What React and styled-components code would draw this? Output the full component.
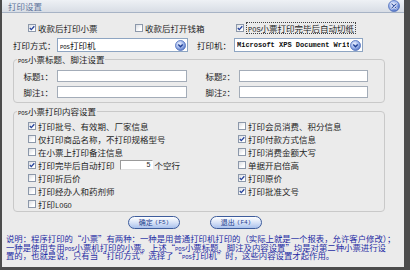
import React from 'react';
import styled, { createGlobalStyle } from 'styled-components';

const CJK = '"Noto Sans CJK SC", "Liberation Sans", sans-serif';

const leftItems = [
  { text: '打印批号、有效期、厂家信息', on: true },
  { text: '仅打印商品名称，不打印规格型号', on: false },
  { text: '在小票上打印备注信息', on: false },
  { text: '打印完毕后自动打印', on: true, blank: '5' },
  { text: '打印折后价', on: false },
  { text: '打印经办人和药剂师', on: false },
  { text: '打印', latin: 'LOGO', on: false },
];

const rightItems = [
  { text: '打印会员消费、积分信息', on: false },
  { text: '打印付款方式信息', on: true },
  { text: '打印消费金额大写', on: false },
  { text: '单据开启倍高', on: false },
  { text: '打印原价', on: true },
  { text: '打印批准文号', on: true },
];

function Check({ on }) {
  return (
    <Box>
      {on && (
        <svg width="6" height="6" viewBox="0 0 6 6">
          <polyline points="0.8,3 2.3,4.6 5.3,1.2" fill="none" stroke="#23409a" strokeWidth="1.3" />
        </svg>
      )}
    </Box>
  );
}

function DropButton() {
  return (
    <svg width="11" height="11" viewBox="0 0 11 11">
      <defs>
        <radialGradient id="db" cx="40%" cy="35%" r="65%">
          <stop offset="0%" stopColor="#eef3ff" />
          <stop offset="60%" stopColor="#9db4ea" />
          <stop offset="100%" stopColor="#5878c6" />
        </radialGradient>
      </defs>
      <circle cx="5.5" cy="5.5" r="5" fill="url(#db)" stroke="#4f6fbb" strokeWidth="0.8" />
      <polyline points="3.3,4.5 5.5,6.7 7.7,4.5" fill="none" stroke="#1f3f95" strokeWidth="1.4" />
    </svg>
  );
}

function CloseButton() {
  return (
    <svg width="12" height="12" viewBox="0 0 12 12">
      <defs>
        <radialGradient id="cb" cx="40%" cy="35%" r="65%">
          <stop offset="0%" stopColor="#e6eeff" />
          <stop offset="60%" stopColor="#93acea" />
          <stop offset="100%" stopColor="#4d6fc2" />
        </radialGradient>
      </defs>
      <circle cx="6" cy="6" r="5.5" fill="url(#cb)" stroke="#5574bd" strokeWidth="0.8" />
      <path d="M3.8 3.8 L8.2 8.2 M8.2 3.8 L3.8 8.2" stroke="#fff" strokeWidth="2.4" strokeLinecap="round" />
      <path d="M3.8 3.8 L8.2 8.2 M8.2 3.8 L3.8 8.2" stroke="#3454a6" strokeWidth="1.2" strokeLinecap="round" />
    </svg>
  );
}

function ContentItem({ item }) {
  return (
    <CheckItem>
      <Check on={item.on} />
      <span>
        {item.text}
        {item.latin && <Lat $size={7}>{item.latin}</Lat>}
      </span>
      {item.blank && (
        <>
          <Blank>{item.blank}</Blank>
          <span>个空行</span>
        </>
      )}
    </CheckItem>
  );
}

export default function App() {
  return (
    <>
      <GlobalStyle />
      <Window>
        <TitleBar>
          <Title>打印设置</Title>
          <CloseButton />
        </TitleBar>
        <Body>
          <Main>
            <TopRow>
              <CheckItem $w={107}>
                <Check on />
                <span>收款后打印小票</span>
              </CheckItem>
              <CheckItem $w={101}>
                <Check on={false} />
                <span>收款后打开钱箱</span>
              </CheckItem>
              <CheckItem>
                <Check on />
                <Focused>
                  <Lat $size={7}>POS</Lat>小票打印完毕后自动切纸
                </Focused>
              </CheckItem>
            </TopRow>

            <SelectRow>
              <Label $w={44}>打印方式：</Label>
              <Select $w={131}>
                <SelectText>
                  <Lat $size={5.5}>POS</Lat>打印机
                </SelectText>
                <DropButton />
              </Select>
              <Label $w={37} $ml={9}>打印机：</Label>
              <Select $w={129}>
                <SelectText $mono>Microsoft XPS Document Writer</SelectText>
                <DropButton />
              </Select>
            </SelectRow>

            <Group $mt={2}>
              <Legend>
                <Lat $size={5.5}>POS</Lat>小票标题、脚注设置
              </Legend>
              <FieldGrid>
                <FieldLabel>标题<Digit>1</Digit>：</FieldLabel>
                <TextBox />
                <FieldLabel>标题<Digit>2</Digit>：</FieldLabel>
                <TextBox />
                <FieldLabel>脚注<Digit>1</Digit>：</FieldLabel>
                <TextBox />
                <FieldLabel>脚注<Digit>2</Digit>：</FieldLabel>
                <TextBox />
              </FieldGrid>
            </Group>

            <Group $mt={3}>
              <Legend>
                <Lat $size={5.5}>POS</Lat>小票打印内容设置
              </Legend>
              <OptionGrid>
                {leftItems.map((it) => (
                  <ContentItem key={it.text + (it.latin || '')} item={it} />
                ))}
                {rightItems.map((it) => (
                  <ContentItem key={it.text} item={it} />
                ))}
              </OptionGrid>
            </Group>

            <ButtonRow>
              <PillButton>确定<Lat $size={6}>(F5)</Lat></PillButton>
              <PillButton>退出<Lat $size={6}>(F4)</Lat></PillButton>
            </ButtonRow>
          </Main>

          <Note>
            <NoteLine>说明：程序打印的“小票”有两种：一种是用普通打印机打印的（实际上就是一个报表，允许客户修改）；</NoteLine>
            <NoteLine>一种是使用专用<Lat $size={5.5}>POS</Lat>小票机打印的小票。上述“<Lat $size={5.5}>POS</Lat>小票标题、脚注及内容设置”均是对第二种小票进行设</NoteLine>
            <NoteLine>置的，也就是说，只有当“打印方式”选择了“<Lat $size={5.5}>POS</Lat>打印机”时，这些内容设置才起作用。</NoteLine>
          </Note>
        </Body>
      </Window>
    </>
  );
}

const GlobalStyle = createGlobalStyle`
  html, body {
    margin: 0;
    padding: 0;
    background: #4e4e4e;
  }
  body {
    font-family: ${CJK};
  }
`;

const Window = styled.div`
  width: 410px;
  height: 270px;
  box-sizing: border-box;
  display: flex;
  flex-direction: column;
  border-left: 2px solid #4c4c4c;
  border-right: 6px solid #4c4c4c;
  border-bottom: 3px solid #4c4c4c;
  background: #ebebeb;
  overflow: hidden;
  color: #1e1e1e;
  font-size: 8.5px;
  line-height: 12px;
`;

const TitleBar = styled.div`
  height: 13px;
  flex-shrink: 0;
  box-sizing: border-box;
  display: flex;
  align-items: center;
  justify-content: space-between;
  padding: 0 4px 0 6px;
  background: linear-gradient(#eef1f5, #d8dde5);
  border-bottom: 1px solid #a7b3c5;
`;

const Title = styled.span`
  font-size: 8.5px;
  line-height: 12px;
  color: #5f769c;
`;

const Body = styled.div`
  display: flex;
  flex-direction: column;
  padding-top: 9px;
`;

const Main = styled.div`
  display: flex;
  flex-direction: column;
  padding-left: 11px;
`;

const Lat = styled.span`
  font-family: "Liberation Mono", monospace;
  font-size: ${(p) => p.$size}px;
  line-height: 0;
`;

const Digit = styled.span`
  font-family: "Liberation Sans", sans-serif;
  font-size: 7px;
  line-height: 0;
`;

const TopRow = styled.div`
  display: flex;
  height: 12px;
  margin-left: 15px;
`;

const CheckItem = styled.label`
  display: flex;
  align-items: center;
  gap: 2px;
  height: 12px;
  width: ${(p) => (p.$w ? `${p.$w}px` : 'auto')};
  white-space: nowrap;
  line-height: 12px;
`;

const Box = styled.span`
  width: 8px;
  height: 8px;
  box-sizing: border-box;
  display: flex;
  align-items: center;
  justify-content: center;
  border: 1px solid #8c98aa;
  background: linear-gradient(135deg, #d9dce2, #ffffff 70%);
  flex-shrink: 0;
`;

const Focused = styled.span`
  border: 1px dotted #444;
  padding: 0 1px;
  line-height: 10px;
`;

const SelectRow = styled.div`
  display: flex;
  align-items: center;
  margin-top: 4px;
  height: 14px;
`;

const Label = styled.span`
  width: ${(p) => p.$w}px;
  margin-left: ${(p) => p.$ml || 0}px;
  white-space: nowrap;
`;

const Select = styled.div`
  width: ${(p) => p.$w}px;
  height: 14px;
  box-sizing: border-box;
  display: flex;
  align-items: center;
  gap: 1px;
  padding: 0 1px 0 2px;
  border: 1px solid #8ea5c2;
  background: #fff;
`;

const SelectText = styled.span`
  flex: 1;
  overflow: hidden;
  white-space: nowrap;
  line-height: 12px;
  font-family: ${(p) => (p.$mono ? '"Liberation Mono", monospace' : CJK)};
  font-size: ${(p) => (p.$mono ? '7px' : '8.5px')};
  font-weight: ${(p) => (p.$mono ? 700 : 400)};
  color: #111;
`;

const Group = styled.fieldset`
  margin: ${(p) => p.$mt}px 0 0 0;
  padding: 0;
  width: 372px;
  box-sizing: border-box;
  min-width: 0;
  border: 1px solid #c9c9c9;
  border-radius: 4px;
`;

const Legend = styled.legend`
  margin-left: 3px;
  padding: 0 1px;
  height: 10px;
  line-height: 10px;
  font-size: 8.5px;
  white-space: nowrap;
`;

const FieldGrid = styled.div`
  display: grid;
  grid-template-columns: 39px 130px 44px 129px;
  grid-auto-rows: 12px;
  column-gap: 4px;
  row-gap: 4px;
  align-items: center;
  padding: 6px 0 4px 0;
`;

const FieldLabel = styled.span`
  text-align: right;
  white-space: nowrap;
  line-height: 12px;
`;

const TextBox = styled.div`
  height: 12px;
  box-sizing: border-box;
  border: 1px solid #a3acb8;
  background: #fff;
`;

const OptionGrid = styled.div`
  display: grid;
  grid-auto-flow: column;
  grid-template-columns: 210px 1fr;
  grid-template-rows: repeat(7, 13px);
  align-items: center;
  padding: 3px 0 1px 14px;
`;

const Blank = styled.span`
  width: 33px;
  height: 10px;
  box-sizing: border-box;
  margin-left: 3px;
  padding-right: 1px;
  display: flex;
  align-items: center;
  justify-content: flex-end;
  border: 1px solid #9a9a9a;
  border-right-color: #fff;
  border-bottom-color: #e0e0e0;
  background: #fff;
  font-family: "Liberation Sans", sans-serif;
  font-size: 7px;
  line-height: 8px;
`;

const ButtonRow = styled.div`
  display: flex;
  gap: 30px;
  margin-top: 4px;
  padding-left: 115px;
`;

const PillButton = styled.button`
  width: 52px;
  height: 13px;
  padding: 0;
  display: flex;
  align-items: center;
  justify-content: center;
  gap: 2px;
  border: 1px solid #3d5c9c;
  border-radius: 7px;
  background: linear-gradient(#ffffff, #d4e0f6 55%, #a9c1ec);
  color: #1c3c8e;
  font-family: ${CJK};
  font-size: 7px;
  line-height: 11px;
`;

const Note = styled.div`
  margin-top: 5px;
  padding-left: 4px;
  color: #1f2ca4;
  font-size: 8.4px;
  white-space: nowrap;
`;

const NoteLine = styled.div`
  height: 8.5px;
  line-height: 8.5px;
`;
